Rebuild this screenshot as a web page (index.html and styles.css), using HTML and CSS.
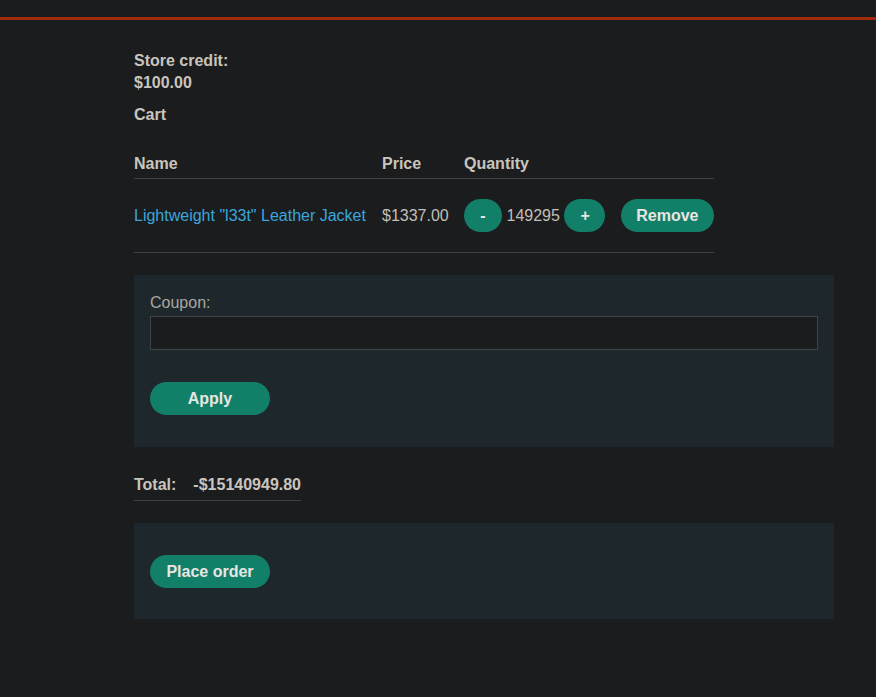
FILE: index.html
```html
<!DOCTYPE html>
<html lang="en">
<head>
<meta charset="utf-8">
<title>Cart</title>
<link rel="stylesheet" href="styles.css">
</head>
<body>
<header class="topbar"></header>
<main class="container">
  <div class="credit">
    <strong class="credit-line">Store credit:</strong>
    <strong class="credit-line">$100.00</strong>
  </div>
  <p class="cart-title">Cart</p>
  <table class="cart-table">
    <thead>
      <tr>
        <th class="col-name">Name</th>
        <th class="col-price">Price</th>
        <th class="col-qty">Quantity</th>
      </tr>
    </thead>
    <tbody>
      <tr>
        <td class="col-name"><a class="product-link" href="#">Lightweight "l33t" Leather Jacket</a></td>
        <td class="col-price">$1337.00</td>
        <td class="col-qty">
          <div class="qty">
            <button class="btn btn-qty">-</button>
            <span class="qty-num">149295</span>
            <button class="btn btn-qty">+</button>
            <button class="btn btn-remove">Remove</button>
          </div>
        </td>
      </tr>
    </tbody>
  </table>

  <form class="panel coupon-panel">
    <label class="coupon-label" for="coupon">Coupon:</label>
    <input class="coupon-input" id="coupon" type="text">
    <button class="btn btn-wide" type="button">Apply</button>
  </form>

  <table class="total-table">
    <tr>
      <th class="total-label">Total:</th>
      <th class="total-value">-$15140949.80</th>
    </tr>
  </table>

  <form class="panel order-panel">
    <button class="btn btn-wide" type="button">Place order</button>
  </form>
</main>
</body>
</html>
```

FILE: styles.css
```css
html, body {
  margin: 0;
  padding: 0;
  background: #1b1c1e;
}

body {
  font-family: "Liberation Sans", Arial, sans-serif;
  font-size: 16px;
  color: #c9c5bd;
  min-height: 697px;
}

.topbar {
  height: 17px;
  border-bottom: 3px solid #a02a0b;
  background: #1b1c1e;
}

.container {
  width: 700px;
  margin-left: 134px;
  padding-top: 30px;
}

.credit {
  display: flex;
  flex-direction: column;
  line-height: 22px;
}

.credit-line {
  font-weight: bold;
}

.cart-title {
  margin: 10px 0 0;
  font-weight: bold;
  line-height: 22px;
}

.cart-table {
  border-collapse: collapse;
  margin-top: 28px;
  width: 580px;
  table-layout: fixed;
}

.cart-table th {
  text-align: left;
  font-weight: bold;
  line-height: 18px;
  padding: 1px 16px 5px 0;
  border-bottom: 1px solid #3f4245;
}

.cart-table td {
  padding: 20px 16px 20px 0;
  line-height: 18px;
  border-bottom: 1px solid #3f4245;
  white-space: nowrap;
  color: #c3bfb7;
}

.cart-table .col-qty {
  padding-right: 0;
}

.col-name { width: 232px; }
.col-price { width: 66px; }

.product-link {
  color: #3aa6dc;
  text-decoration: none;
}

.qty {
  display: flex;
  align-items: center;
}

.qty-num {
  margin: 0 4.5px;
}

.btn {
  font-family: "Liberation Sans", Arial, sans-serif;
  font-size: 16px;
  font-weight: bold;
  color: #e8e6e3;
  background: #127f68;
  border: 0;
  border-radius: 20px;
  height: 33px;
  padding: 0 16px;
  line-height: 33px;
  cursor: pointer;
}

.btn-qty {
  min-width: 38px;
}

.btn-remove {
  margin-left: 16px;
  padding: 0 15.5px;
}

.panel {
  background: #1e272b;
  display: flex;
  flex-direction: column;
  align-items: flex-start;
  padding: 32px 16px 31px;
}

.coupon-panel {
  margin-top: 22px;
  padding-top: 18px;
  padding-bottom: 32px;
}

.coupon-label {
  line-height: 20px;
  color: #aaa69f;
}

.coupon-input {
  box-sizing: border-box;
  width: 668px;
  height: 34px;
  margin-top: 3px;
  background: #1b1c1e;
  border: 1px solid #3e4447;
  color: #c9c5bd;
}

.btn-wide {
  min-width: 120px;
}

.coupon-panel .btn-wide {
  margin-top: 32px;
}

.total-table {
  border-collapse: collapse;
  margin-top: 29px;
}

.total-table th {
  text-align: left;
  font-weight: bold;
  line-height: 18px;
  padding: 0 0 6px 0;
  border-bottom: 1px solid #3f4245;
}

.total-label {
  padding-right: 17px !important;
}

.order-panel {
  margin-top: 22px;
}
```
